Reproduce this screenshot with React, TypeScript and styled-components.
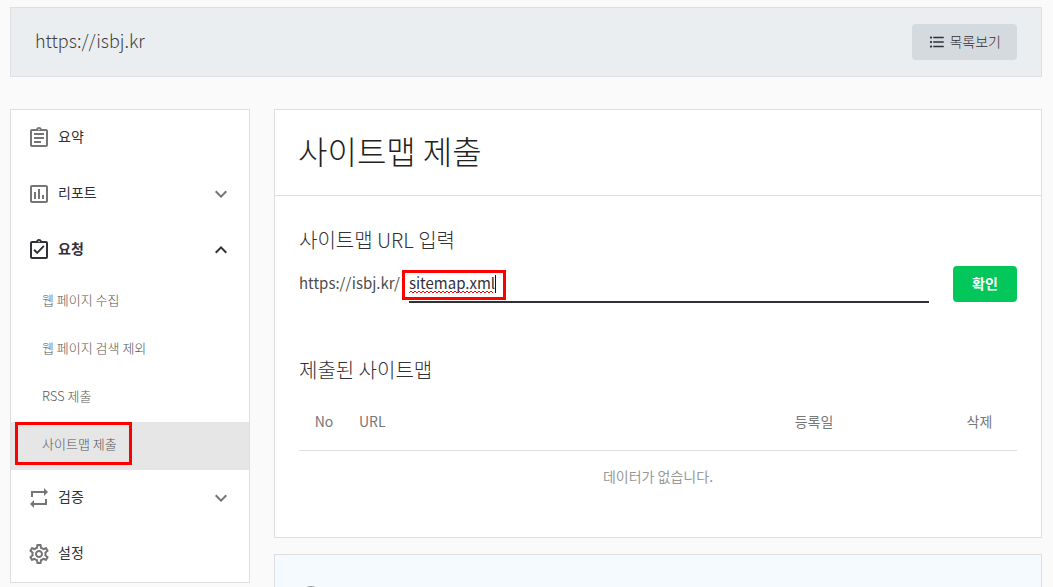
import React from "react";
import styled, { createGlobalStyle } from "styled-components";
import {
  MdExpandLess,
  MdExpandMore,
  MdFormatListBulleted,
  MdInfoOutline,
  MdOutlineAssignment,
  MdOutlineSettings,
} from "react-icons/md";

const GlobalStyle = createGlobalStyle`
  *, *::before, *::after { box-sizing: border-box; }
  body {
    margin: 0;
    background: #fafafa;
    color: #303038;
    font-family: "Noto Sans CJK KR", sans-serif;
    font-size: 14px;
    font-weight: 400;
    line-height: 20px;
    overflow: hidden;
  }
  button, input { font: inherit; color: inherit; }
  h1, h2, ul { margin: 0; padding: 0; font-weight: 300; }
  ul { list-style: none; }
`;

const Page = styled.div`
  padding: 7px 11px 0 10px;
  height: 100vh;
  overflow: hidden;
`;

const SiteBar = styled.header`
  display: flex;
  align-items: center;
  justify-content: space-between;
  padding: 16px 24px;
  border: 1px solid #dedfe0;
  background: #eaeef1;
`;

const SiteName = styled.span`
  padding-bottom: 4px;
  font-size: 18px;
  font-weight: 300;
  line-height: 24px;
  color: #3c3e40;
`;

const ListButton = styled.button`
  display: flex;
  align-items: center;
  gap: 3px;
  height: 36px;
  padding: 0 16px;
  border: 0;
  border-radius: 4px;
  background: #d5dade;
  color: #303038;
  span { padding-bottom: 2px; font-weight: 300; }
`;

const Columns = styled.div`
  display: grid;
  grid-template-columns: 240px minmax(0, 1fr);
  gap: 24px;
  align-items: start;
  margin-top: 32px;
`;

const Sidebar = styled.nav`
  border: 1px solid #dedede;
  background: #fff;
`;

const MenuButton = styled.button<{ $open?: boolean }>`
  display: flex;
  align-items: center;
  gap: 7px;
  width: 100%;
  height: 56px;
  padding: 0 16px;
  border: 0;
  background: none;
  text-align: left;
  color: #303038;
  font-weight: ${(p) => (p.$open ? 700 : 400)};
  svg { flex: none; color: ${(p) => (p.$open ? "#303038" : "#757575")}; }
`;

const MenuLabel = styled.span`
  flex: 1;
  padding-bottom: 4px;
`;

const SubLink = styled.a<{ $active?: boolean }>`
  display: flex;
  align-items: flex-start;
  height: 48px;
  padding-left: 4px;
  background: ${(p) => (p.$active ? "#e6e6e6" : "transparent")};
  color: #555;
  font-size: 13px;
  font-weight: 300;
  text-decoration: none;
`;

const SubText = styled.span<{ $marked?: boolean }>`
  display: flex;
  align-items: center;
  height: 43px;
  padding: 1px 12px 0 24px;
  border: 3px solid ${(p) => (p.$marked ? "#f00" : "transparent")};
`;

const Content = styled.main`
  display: grid;
  gap: 16px;
`;

const Card = styled.section`
  border: 1px solid #dedede;
  background: #fff;
`;

const Title = styled.h1`
  padding: 16px 23px 21px;
  border-bottom: 1px solid #dedede;
  color: #222;
  font-size: 32px;
  line-height: 48px;
`;

const CardBody = styled.div`
  padding: 30px 24px 41px;
`;

const SectionTitle = styled.h2`
  font-size: 20px;
  line-height: 28px;
  color: #303038;
`;

const UrlForm = styled.form`
  display: flex;
  align-items: flex-start;
  gap: 24px;
  margin: 12px 0 53px;
`;

const UrlField = styled.label`
  display: flex;
  flex: 1;
  align-items: center;
  gap: 9px;
  height: 37px;
  color: #4c4e50;
  font-size: 15px;
`;

const Prefix = styled.span`
  padding-bottom: 4px;
`;

const InputArea = styled.span`
  position: relative;
  display: flex;
  flex: 1;
`;

const UrlInput = styled.input`
  flex: 1;
  min-width: 0;
  height: 37px;
  padding: 0 0 2px;
  border: 0;
  border-bottom: 2px solid #303038;
  outline: 0;
  background: none;
  color: #303038;
`;

const Highlight = styled.span`
  position: absolute;
  top: 4px;
  left: -7px;
  width: 104px;
  height: 30px;
  border: 3px solid #f00;
  pointer-events: none;
`;

const Squiggle = styled.svg`
  position: absolute;
  top: 24px;
  left: 0;
  pointer-events: none;
`;

const Caret = styled.span`
  position: absolute;
  top: 9px;
  left: 86px;
  width: 1px;
  height: 18px;
  background: #111;
  pointer-events: none;
`;

const SubmitButton = styled.button`
  width: 64px;
  height: 36px;
  padding: 0 0 2px;
  border: 0;
  border-radius: 4px;
  background: #03c75a;
  color: #fff;
  font-weight: 700;
`;

const SitemapTable = styled.table`
  width: 100%;
  margin-top: 10px;
  border-collapse: collapse;
  table-layout: fixed;
  th {
    height: 56px;
    padding: 0 0 2px;
    border-bottom: 1px solid #dedede;
    color: #777;
    font-weight: 400;
  }
  th:nth-child(1) { width: 50px; }
  th:nth-child(2) { padding-left: 10px; text-align: left; }
  th:nth-child(3) { width: 256px; }
  th:nth-child(4) { width: 75px; }
  td {
    height: 46px;
    padding: 5px 0 0;
    color: #999;
    text-align: center;
    vertical-align: top;
    line-height: 40px;
  }
`;

const NoticeCard = styled(Card)`
  height: 120px;
  padding: 29px 24px;
  background: #f4fafd;
  color: #9a9da0;
`;

const ReportIcon = () => (
  <svg width="24" height="24" viewBox="0 0 24 24" fill="currentColor" aria-hidden="true">
    <path d="M19 3H5c-1.1 0-2 .9-2 2v14c0 1.1.9 2 2 2h14c1.1 0 2-.9 2-2V5c0-1.1-.9-2-2-2zm0 16H5V5h14v14zM7 10h2v7H7zm4-3h2v10h-2zm4 6h2v4h-2z" />
  </svg>
);

const RequestIcon = () => (
  <svg width="24" height="24" viewBox="0 0 24 24" fill="currentColor" aria-hidden="true">
    <path d="M19 3h-4.18C14.4 1.84 13.3 1 12 1s-2.4.84-2.82 2H5c-1.1 0-2 .9-2 2v14c0 1.1.9 2 2 2h14c1.1 0 2-.9 2-2V5c0-1.1-.9-2-2-2zm-7-.25c.41 0 .75.34.75.75s-.34.75-.75.75-.75-.34-.75-.75.34-.75.75-.75zM19 19H5V5h14v14z" />
    <path d="M17.6 8.6 16.2 7.2 10.2 13.5 7.8 11.1 6.4 12.5 10.2 16.3z" />
  </svg>
);

const VerifyIcon = () => (
  <svg width="24" height="24" viewBox="0 0 24 24" fill="currentColor" aria-hidden="true">
    <path d="M4 5h13V2l4 4-4 4V7H6v4H4zM20 19H7v3l-4-4 4-4v3h11v-4h2z" />
  </svg>
);

const squigglePoints = Array.from({ length: 43 }, (_, i) => `${i * 2},${i % 2 ? 1 : 3}`).join(" ");

const subItems = ["웹 페이지 수집", "웹 페이지 검색 제외", "RSS 제출", "사이트맵 제출"];

export default function App() {
  return (
    <>
      <GlobalStyle />
      <Page>
        <SiteBar>
          <SiteName>https://isbj.kr</SiteName>
          <ListButton type="button">
            <MdFormatListBulleted size={18} />
            <span>목록보기</span>
          </ListButton>
        </SiteBar>
        <Columns>
          <Sidebar>
            <MenuButton type="button">
              <MdOutlineAssignment size={24} />
              <MenuLabel>요약</MenuLabel>
            </MenuButton>
            <MenuButton type="button" aria-expanded="false">
              <ReportIcon />
              <MenuLabel>리포트</MenuLabel>
              <MdExpandMore size={24} />
            </MenuButton>
            <MenuButton type="button" $open aria-expanded="true">
              <RequestIcon />
              <MenuLabel>요청</MenuLabel>
              <MdExpandLess size={24} />
            </MenuButton>
            <ul>
              {subItems.map((item, i) => (
                <li key={item}>
                  <SubLink href="#" $active={i === 3}>
                    <SubText $marked={i === 3}>{item}</SubText>
                  </SubLink>
                </li>
              ))}
            </ul>
            <MenuButton type="button" aria-expanded="false">
              <VerifyIcon />
              <MenuLabel>검증</MenuLabel>
              <MdExpandMore size={24} />
            </MenuButton>
            <MenuButton type="button">
              <MdOutlineSettings size={24} />
              <MenuLabel>설정</MenuLabel>
            </MenuButton>
          </Sidebar>
          <Content>
            <Card>
              <Title>사이트맵 제출</Title>
              <CardBody>
                <SectionTitle>사이트맵 URL 입력</SectionTitle>
                <UrlForm onSubmit={(e) => e.preventDefault()}>
                  <UrlField>
                    <Prefix>https://isbj.kr/</Prefix>
                    <InputArea>
                      <UrlInput type="text" defaultValue="sitemap.xml" spellCheck={false} />
                      <Squiggle width="85" height="4" viewBox="0 0 85 4" aria-hidden="true">
                        <polyline points={squigglePoints} fill="none" stroke="#f00" />
                      </Squiggle>
                      <Caret />
                      <Highlight />
                    </InputArea>
                  </UrlField>
                  <SubmitButton type="submit">확인</SubmitButton>
                </UrlForm>
                <SectionTitle>제출된 사이트맵</SectionTitle>
                <SitemapTable>
                  <thead>
                    <tr>
                      <th>No</th>
                      <th>URL</th>
                      <th>등록일</th>
                      <th>삭제</th>
                    </tr>
                  </thead>
                  <tbody>
                    <tr>
                      <td colSpan={4}>데이터가 없습니다.</td>
                    </tr>
                  </tbody>
                </SitemapTable>
              </CardBody>
            </Card>
            <NoticeCard>
              <MdInfoOutline size={24} />
            </NoticeCard>
          </Content>
        </Columns>
      </Page>
    </>
  );
}
